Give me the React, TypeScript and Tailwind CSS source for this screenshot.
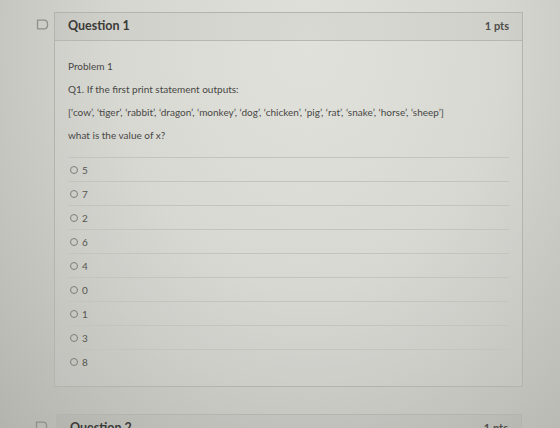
import React from 'react';

const options = ['5', '7', '2', '6', '4', '0', '1', '3', '8'];

const animals = "[‘cow’, ‘tiger’, ‘rabbit’, ‘dragon’, ‘monkey’, ‘dog’, ‘chicken’, ‘pig’, ‘rat’, ‘snake’, ‘horse’, ‘sheep’]";

const FlagIcon: React.FC = () => (
  <svg width="13" height="11" viewBox="0 0 13 11" fill="none">
    <path d="M1.5 1.2H8.2C10.4 1.2 11.6 3 11.6 5.5C11.6 8 10.4 9.8 8.2 9.8H1.5Z" stroke="#8f8f8c" strokeWidth="1.3" strokeLinejoin="round" />
  </svg>
);

const Radio: React.FC = () => (
  <span className="w-[8px] h-[8px] rounded-full border border-[#7d7d7a] box-border shrink-0" />
);

type CardHeaderProps = { title: string; points: string };

const CardHeader: React.FC<CardHeaderProps> = ({ title, points }) => (
  <div className="h-[28px] flex items-center justify-between pl-[13px] pr-[13px] bg-black/[0.035] border-b border-[#b7b7b2]">
    <span className="text-[12.5px] font-bold text-[#3a3a38]">{title}</span>
    <span className="text-[11px] font-bold text-[#4e4e4b]">{points}</span>
  </div>
);

export default function App() {
  return (
    <div
      className="w-[560px] h-[428px] overflow-hidden bg-[radial-gradient(ellipse_at_55%_10%,#e0e0da_0%,#d6d6d0_45%,#c1c1bc_80%,#b4b4af_100%)] pt-[12px]"
      style={{ fontFamily: 'Lato, "Open Sans", sans-serif' }}
    >
      {/* Question 1 */}
      <div className="flex items-start">
        <div className="w-[54px] flex justify-end pr-[5px] pt-[7px]">
          <FlagIcon />
        </div>
        <div className="w-[469px] border border-[#b4b4af] bg-white/[0.06]">
          <CardHeader title="Question 1" points="1 pts" />
          <div className="pl-[13px] pr-[13px] pt-[18px] pb-[12px] text-[10px] leading-[14px] text-[#474745]">
            <p>Problem 1</p>
            <p className="mt-[9px]">Q1. If the first print statement outputs:</p>
            <p className="mt-[9px]">{animals}</p>
            <p className="mt-[9px]">what is the value of x?</p>
            <ul className="mt-[15px] border-t border-[#c4c4bf]">
              {options.map((opt, i) => (
                <li
                  key={opt}
                  className={`h-[24px] box-border flex items-center gap-[4px] pl-[2px] text-[#55554f] ${i < options.length - 1 ? 'border-b border-[#c4c4bf]' : ''}`}
                >
                  <Radio />
                  <span className="text-[10px]">{opt}</span>
                </li>
              ))}
            </ul>
          </div>
        </div>
      </div>

      {/* Question 2 */}
      <div className="flex items-start mt-[27px]">
        <div className="w-[54px] flex justify-end pr-[6px] pt-[7px]">
          <FlagIcon />
        </div>
        <div className="w-[466px] ml-[2px] border border-[#b4b4af] bg-white/[0.04]">
          <CardHeader title="Question 2" points="1 pts" />
        </div>
      </div>
    </div>
  );
}
